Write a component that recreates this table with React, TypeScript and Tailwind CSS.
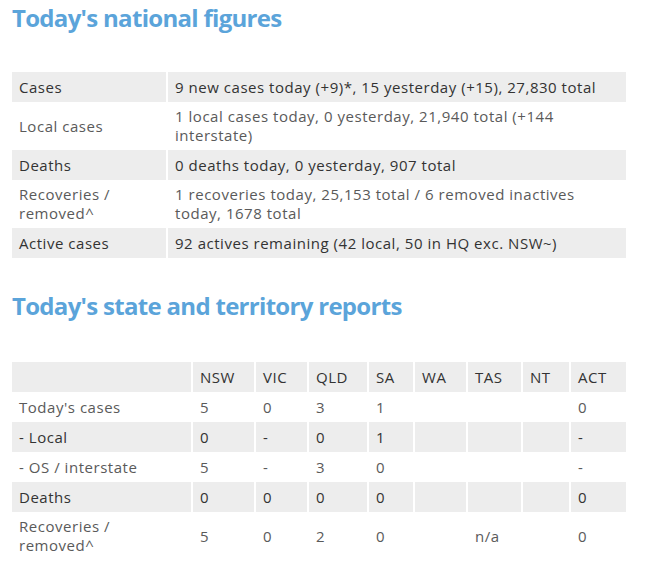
import React from "react";

const font = { fontFamily: '"Open Sans", "Noto Sans", sans-serif' };

type Row1 = { label: React.ReactNode; value: React.ReactNode; tall?: boolean };

const national: Row1[] = [
  { label: "Cases", value: "9 new cases today (+9)*, 15 yesterday (+15), 27,830 total" },
  {
    label: "Local cases",
    value: (
      <>
        <span className="block whitespace-nowrap">1 local cases today, 0 yesterday, 21,940 total (+144</span>
        <span className="block whitespace-nowrap">interstate)</span>
      </>
    ),
    tall: true,
  },
  { label: "Deaths", value: "0 deaths today, 0 yesterday, 907 total" },
  {
    label: (
      <>
        <span className="block whitespace-nowrap">Recoveries /</span>
        <span className="block whitespace-nowrap">removed^</span>
      </>
    ),
    value: (
      <>
        <span className="block whitespace-nowrap">1 recoveries today, 25,153 total / 6 removed inactives</span>
        <span className="block whitespace-nowrap">today, 1678 total</span>
      </>
    ),
    tall: true,
  },
  { label: "Active cases", value: "92 actives remaining (42 local, 50 in HQ exc. NSW~)" },
];

const states = ["NSW", "VIC", "QLD", "SA", "WA", "TAS", "NT", "ACT"];

type Row2 = { label: React.ReactNode; cells: string[]; tall?: boolean };

const stateRows: Row2[] = [
  { label: "Today's cases", cells: ["5", "0", "3", "1", "", "", "", "0"] },
  { label: "- Local", cells: ["0", "-", "0", "1", "", "", "", "-"] },
  { label: "- OS / interstate", cells: ["5", "-", "3", "0", "", "", "", "-"] },
  { label: "Deaths", cells: ["0", "0", "0", "0", "", "", "", "0"] },
  {
    label: (
      <>
        <span className="block whitespace-nowrap">Recoveries /</span>
        <span className="block whitespace-nowrap">removed^</span>
      </>
    ),
    cells: ["5", "0", "2", "0", "", "n/a", "", "0"],
    tall: true,
  },
];

function Cell({
  children,
  gray,
  tall,
}: {
  children?: React.ReactNode;
  gray: boolean;
  tall?: boolean;
}) {
  return (
    <div
      className={
        (gray ? "bg-[#ededed] text-[#333333] " : "bg-white text-[#5a5a5a] ") +
        (tall ? "h-[48px] " : "h-[30px] ") +
        "flex flex-col justify-center px-[7px] text-[15px] leading-[19px] tracking-[0.53px]"
      }
    >
      {children}
    </div>
  );
}

export default function App() {
  return (
    <div className="w-[653px] h-[568px] bg-white px-[12px] pt-[3px]" style={font}>
      <h2 className="text-[24px] leading-[30px] font-bold tracking-[-0.7px] text-[#5ba4da]">
        Today's national figures
      </h2>
      <div className="mt-[39px] w-[614px] grid grid-cols-[154px_458px] gap-x-[2px]">
        {national.map((r, i) => (
          <React.Fragment key={i}>
            <Cell gray={i % 2 === 0} tall={r.tall}>
              {r.label}
            </Cell>
            <Cell gray={i % 2 === 0} tall={r.tall}>
              {r.value}
            </Cell>
          </React.Fragment>
        ))}
      </div>
      <h2 className="mt-[33px] text-[24px] leading-[30px] font-bold tracking-[-0.7px] text-[#5ba4da]">
        Today's state and territory reports
      </h2>
      <div className="mt-[41px] w-[614px] grid grid-cols-[179px_61px_51px_58px_44px_51px_53px_46px_55px] gap-x-[2px]">
        <Cell gray={true} />
        {states.map((s) => (
          <Cell key={s} gray={true}>
            {s}
          </Cell>
        ))}
        {stateRows.map((r, i) => (
          <React.Fragment key={i}>
            <Cell gray={i % 2 === 1} tall={r.tall}>
              {r.label}
            </Cell>
            {r.cells.map((c, j) => (
              <Cell key={j} gray={i % 2 === 1} tall={r.tall}>
                {c}
              </Cell>
            ))}
          </React.Fragment>
        ))}
      </div>
    </div>
  );
}
